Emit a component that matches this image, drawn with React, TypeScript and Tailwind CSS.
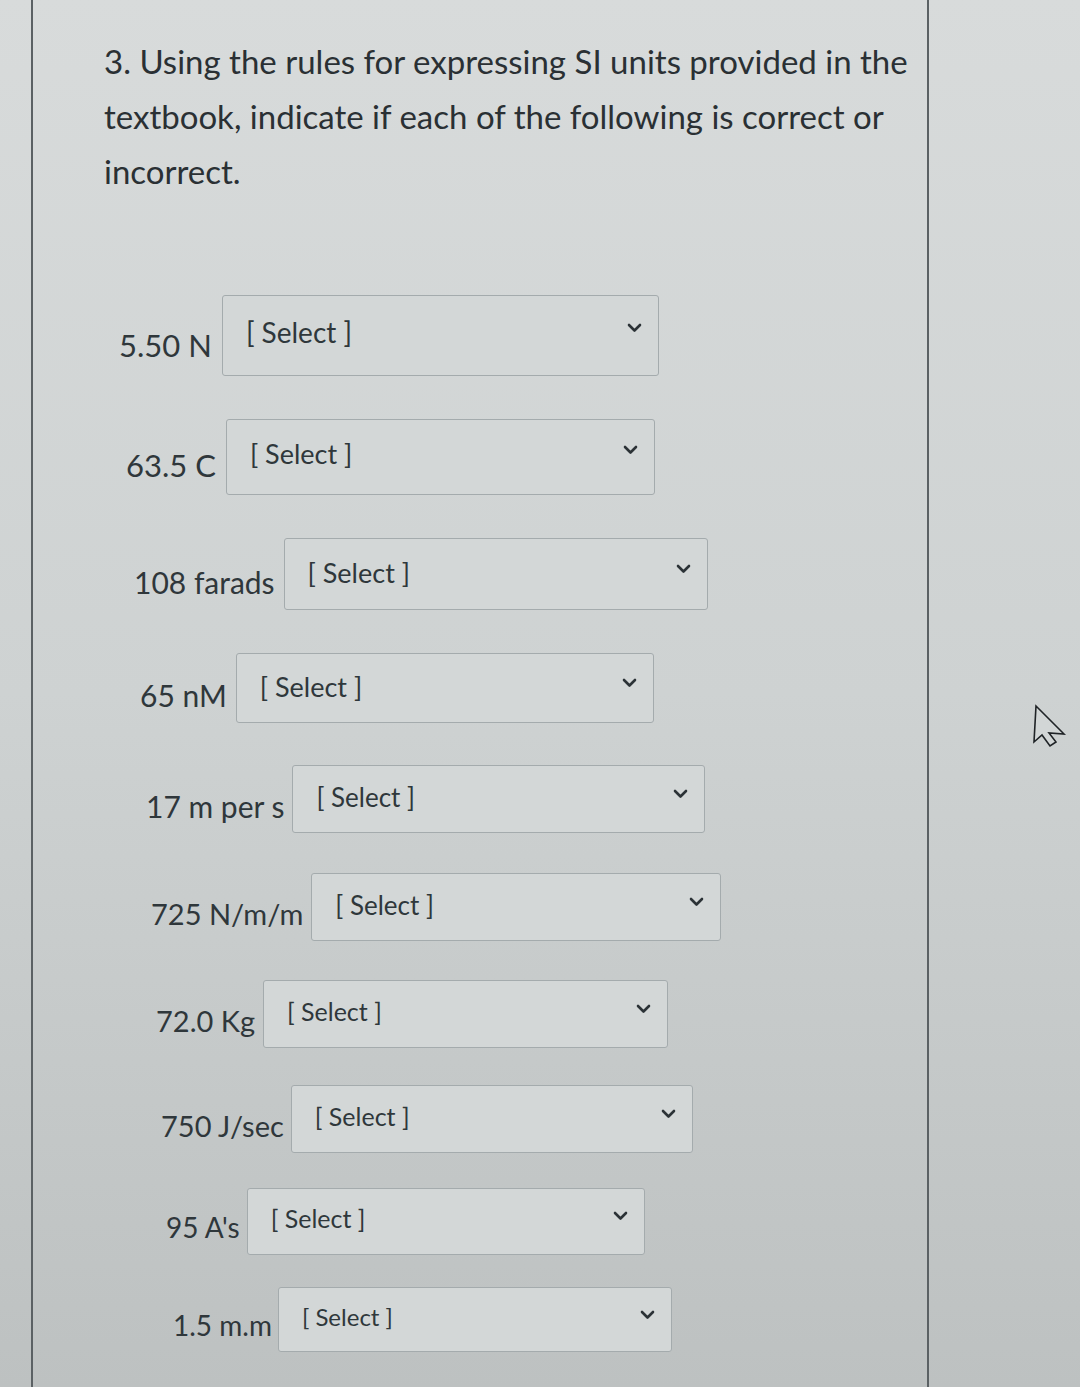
import React from 'react';

type Row = {
  label: string;
  rowClass: string;
  labelClass: string;
  boxClass: string;
  textClass: string;
};

// one entry per answer line; the photo is taken at an angle so every row drifts right and flattens
const rows: Row[] = [
  { label: '5.50 N', rowClass: 'mt-[96px] ml-[15px]', labelClass: 'text-[31px] pt-[20px] pr-[10px]', boxClass: 'w-[437px] h-[81px] pt-[22px]', textClass: 'text-[28px]' },
  { label: '63.5 C', rowClass: 'mt-[43px] ml-[22px]', labelClass: 'text-[31px] pt-[16px] pr-[10px]', boxClass: 'w-[429px] h-[76px] pt-[20px]', textClass: 'text-[27px]' },
  { label: '108 farads', rowClass: 'mt-[43px] ml-[30px]', labelClass: 'text-[30px] pt-[16px] pr-[9px]', boxClass: 'w-[424px] h-[72px] pt-[20px]', textClass: 'text-[27px]' },
  { label: '65 nM', rowClass: 'mt-[43px] ml-[36px]', labelClass: 'text-[30px] pt-[14px] pr-[9px]', boxClass: 'w-[418px] h-[70px] pt-[19px]', textClass: 'text-[27px]' },
  { label: '17 m per s', rowClass: 'mt-[42px] ml-[42px]', labelClass: 'text-[30px] pt-[14px] pr-[8px]', boxClass: 'w-[413px] h-[68px] pt-[18px]', textClass: 'text-[26px]' },
  { label: '725 N/m/m', rowClass: 'mt-[40px] ml-[47px]', labelClass: 'text-[29px] pt-[12px] pr-[8px]', boxClass: 'w-[410px] h-[68px] pt-[18px]', textClass: 'text-[26px]' },
  { label: '72.0 Kg', rowClass: 'mt-[39px] ml-[52px]', labelClass: 'text-[29px] pt-[12px] pr-[8px]', boxClass: 'w-[405px] h-[68px] pt-[18px]', textClass: 'text-[25px]' },
  { label: '750 J/sec', rowClass: 'mt-[37px] ml-[57px]', labelClass: 'text-[29px] pt-[12px] pr-[7px]', boxClass: 'w-[402px] h-[68px] pt-[18px]', textClass: 'text-[25px]' },
  { label: "95 A's", rowClass: 'mt-[35px] ml-[62px]', labelClass: 'text-[28px] pt-[10px] pr-[7px]', boxClass: 'w-[398px] h-[67px] pt-[17px]', textClass: 'text-[25px]' },
  { label: '1.5 m.m', rowClass: 'mt-[32px] ml-[69px]', labelClass: 'text-[28px] pt-[10px] pr-[6px]', boxClass: 'w-[394px] h-[65px] pt-[17px]', textClass: 'text-[24px]' },
];

const Chevron = () => (
  <svg width="15" height="10" viewBox="0 0 15 10" className="shrink-0">
    <polyline points="2,2 7.5,7.5 13,2" fill="none" stroke="#2b3236" strokeWidth="2.6" strokeLinecap="round" strokeLinejoin="round" />
  </svg>
);

const SelectBox = ({ boxClass, textClass }: { boxClass: string; textClass: string }) => (
  <div className={`flex items-start justify-between border border-[#a4abad] rounded-[3px] bg-[#d3d7d7] pl-[23px] pr-[16px] ${boxClass}`}>
    <span className={`leading-none text-[#2f373b] ${textClass}`}>[ Select ]</span>
    <span className="pt-[5px]"><Chevron /></span>
  </div>
);

const Cursor = () => (
  <svg width="40" height="50" viewBox="0 0 40 50" className="absolute left-[1030px] top-[700px]">
    <polygon
      points="6,6 4,42 12,35 20,46 26,42 19,33 34,34"
      fill="#d2d6d6"
      stroke="#1f2326"
      strokeWidth="1.6"
      strokeLinejoin="miter"
    />
  </svg>
);

export default function App() {
  return (
    <div
      className="relative min-h-[1387px] w-[1080px] overflow-hidden bg-linear-to-b from-[#d8dbdb] via-[#ced2d2] to-[#bdc1c1]"
      style={{ fontFamily: 'Lato, "Open Sans", sans-serif' }}
    >
      <div className="ml-[31px] w-[898px] min-h-[1387px] border-l-2 border-r-2 border-[#5b6164] pl-[71px] pt-[34px]">
        <p className="text-[33px] leading-[55px] text-[#2a3034] w-[815px]">
          3. Using the rules for expressing SI units provided in the textbook, indicate if each of the following is correct or
          incorrect.
        </p>

        {rows.map((row) => (
          <div key={row.label} className={`flex items-center ${row.rowClass}`}>
            <span className={`leading-none text-[#2f373b] ${row.labelClass}`}>{row.label}</span>
            <SelectBox boxClass={row.boxClass} textClass={row.textClass} />
          </div>
        ))}
      </div>
      <Cursor />
    </div>
  );
}
